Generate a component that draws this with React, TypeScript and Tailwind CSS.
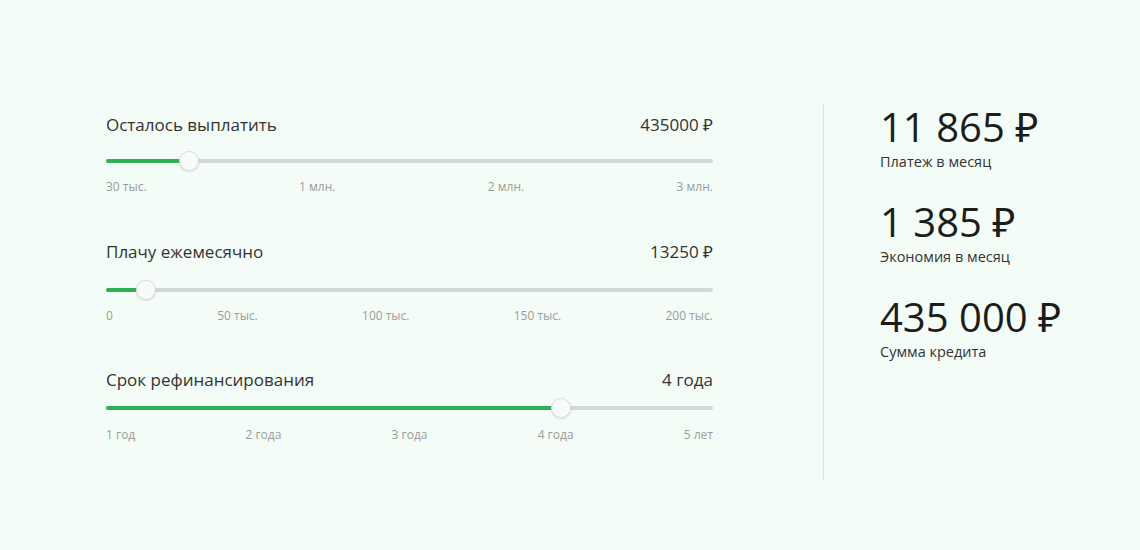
import React from "react";

type SliderProps = {
  label: string;
  value: string;
  pct: number;
  ticks: string[];
  gapTrack: string;
  gapTicks: string;
};

function Slider({ label, value, pct, ticks, gapTrack, gapTicks }: SliderProps) {
  return (
    <div className="flex flex-col">
      <div className="flex h-[24px] items-center justify-between text-[17px] text-[#333]">
        <span>{label}</span>
        <span>{value}</span>
      </div>
      <div className={`relative h-[20px] ${gapTrack}`}>
        <div className="absolute left-0 right-0 top-[8px] h-[4px] rounded-full bg-[#d3d8d5]" />
        <div
          className="absolute left-0 top-[8px] h-[4px] rounded-full bg-[#30b056]"
          style={{ width: `${pct}%` }}
        />
        <div
          className="absolute top-0 h-[20px] w-[20px] -translate-x-1/2 rounded-full border border-[#d9dedb] bg-[#f9fbfa] shadow-[0_1px_2px_rgba(0,0,0,0.12)]"
          style={{ left: `${pct}%` }}
        />
      </div>
      <div className={`flex h-[16px] items-center justify-between text-[12px] text-[#999c9a] ${gapTicks}`}>
        {ticks.map((t) => (
          <span key={t}>{t}</span>
        ))}
      </div>
    </div>
  );
}

function Stat({ value, label, first }: { value: string; label: string; first?: boolean }) {
  return (
    <div className={first ? "" : "mt-[26px]"}>
      <div className="h-[48px] text-[40px] leading-[48px] text-[#1c1c1c]">{value}</div>
      <div className="mt-[1px] h-[20px] text-[14.5px] leading-[20px] text-[#333]">{label}</div>
    </div>
  );
}

export default function App() {
  return (
    <div
      className="h-[550px] w-full bg-[#f3fcf6]"
      style={{ fontFamily: '"Open Sans", "Noto Sans", sans-serif' }}
    >
      <div className="flex items-start pl-[106px] pt-[103px]">
        <div className="mt-[10px] flex w-[607px] flex-col">
          <Slider
            label="Осталось выплатить"
            value="435000 ₽"
            pct={13.7}
            ticks={["30 тыс.", "1 млн.", "2 млн.", "3 млн."]}
            gapTrack="mt-[14px]"
            gapTicks="mt-[8px]"
          />
          <div className="mt-[45px]">
            <Slider
              label="Плачу ежемесячно"
              value="13250 ₽"
              pct={6.6}
              ticks={["0", "50 тыс.", "100 тыс.", "150 тыс.", "200 тыс."]}
              gapTrack="mt-[16px]"
              gapTicks="mt-[8px]"
            />
          </div>
          <div className="mt-[44px]">
            <Slider
              label="Срок рефинансирования"
              value="4 года"
              pct={75}
              ticks={["1 год", "2 года", "3 года", "4 года", "5 лет"]}
              gapTrack="mt-[6px]"
              gapTicks="mt-[9px]"
            />
          </div>
        </div>
        <div className="ml-[110px] mt-[1px] h-[376px] w-px bg-[#dce3de]" />
        <div className="ml-[56px] flex flex-col">
          <Stat value="11 865 ₽" label="Платеж в месяц" first />
          <Stat value="1 385 ₽" label="Экономия в месяц" />
          <Stat value="435 000 ₽" label="Сумма кредита" />
        </div>
      </div>
    </div>
  );
}
